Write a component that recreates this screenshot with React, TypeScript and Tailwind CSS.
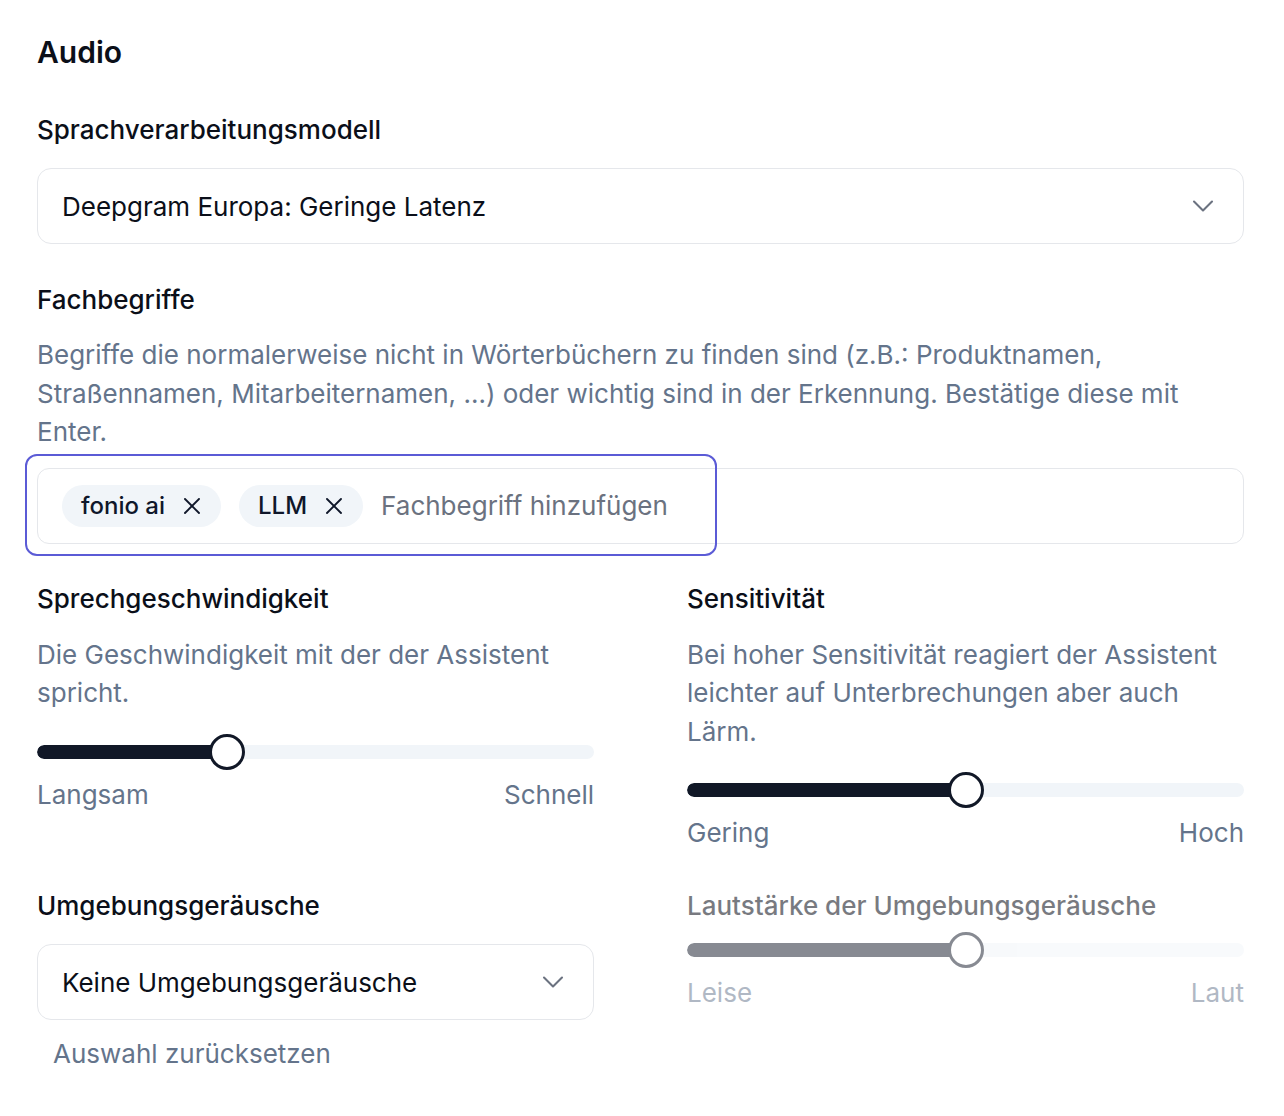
import { ChevronDown, X } from "lucide-react";

type SliderProps = {
  value: number;
  disabled?: boolean;
};

// track spans the full column; the thumb stays inside the track like radix does
const Slider = ({ value, disabled }: SliderProps) => {
  const thumbLeft = `calc(${value}% - ${(value / 100) * 36}px)`;
  const fillWidth = `calc(${value}% - ${(value / 100) * 36}px + 18px)`;
  return (
    <div className={`relative flex h-9 items-center ${disabled ? "opacity-50" : ""}`}>
      <div className="h-[14px] w-full overflow-hidden rounded-full bg-[#f1f5f9]">
        <div className="h-full rounded-full bg-[#111827]" style={{ width: fillWidth }} />
      </div>
      <span
        className="absolute top-0 h-9 w-9 rounded-full border-[3px] border-[#111827] bg-white"
        style={{ left: thumbLeft }}
      />
    </div>
  );
};

const Scale = ({ from, to, disabled }: { from: string; to: string; disabled?: boolean }) => (
  <div className={`mt-[6px] flex justify-between text-[26px] leading-[38px] text-[#64748b] ${disabled ? "opacity-50" : ""}`}>
    <span>{from}</span>
    <span>{to}</span>
  </div>
);

const SelectBox = ({ label }: { label: string }) => (
  <button
    type="button"
    className="flex h-[76px] w-full items-center justify-between rounded-[14px] border border-[#e5e7eb] bg-white pl-6 pr-[22px] text-left text-[26px] text-[#0b0f19]"
  >
    <span>{label}</span>
    <ChevronDown size={36} strokeWidth={1.4} className="text-[#6b7280]" />
  </button>
);

const Tag = ({ label }: { label: string }) => (
  <span className="flex h-[42px] items-center gap-[13px] rounded-full bg-[#f1f5f9] pl-[19px] pr-[15px] text-[24px] font-medium text-[#0f172a]">
    {label}
    <X size={28} strokeWidth={1.6} />
  </span>
);

const Label = ({ children }: { children: React.ReactNode }) => (
  <h3 className="text-[26px] font-medium leading-[38px] text-[#0b0f19]">{children}</h3>
);

const Hint = ({ children }: { children: React.ReactNode }) => (
  <p className="mt-[18px] text-[26px] leading-[38.5px] text-[#64748b]">{children}</p>
);

export default function App() {
  return (
    <div className="min-h-screen bg-white px-[37px] pt-[30px] font-['Inter',sans-serif] text-[#0b0f19]">
      <h2 className="text-[30px] font-semibold leading-[44px]">Audio</h2>

      <div className="mt-[37px]">
        <Label>Sprachverarbeitungsmodell</Label>
        <div className="mt-[19px] w-[1207px]">
          <SelectBox label="Deepgram Europa: Geringe Latenz" />
        </div>
      </div>

      <div className="mt-[37px] w-[1207px]">
        <Label>Fachbegriffe</Label>
        <p className="mt-[17px] text-[26px] leading-[38.5px] text-[#64748b]">
          Begriffe die normalerweise nicht in Wörterbüchern zu finden sind (z.B.: Produktnamen, Straßennamen,
          Mitarbeiternamen, ...) oder wichtig sind in der Erkennung. Bestätige diese mit Enter.
        </p>
        <div className="relative mt-[16px]">
          <div className="flex h-[76px] items-center gap-[18px] rounded-[12px] border border-[#e5e7eb] bg-white pl-6">
            <Tag label="fonio ai" />
            <Tag label="LLM" />
            <input
              placeholder="Fachbegriff hinzufügen"
              className="w-[400px] bg-transparent text-[26px] text-[#0b0f19] outline-none placeholder:text-[#6b7280]"
            />
          </div>
          {/* focus ring of the tag editor */}
          <div className="pointer-events-none absolute -top-[14px] -left-3 h-[102px] w-[692px] rounded-[12px] border-2 border-[#5b5bd6]" />
        </div>
      </div>

      <div className="mt-[36px] grid w-[1207px] grid-cols-[557px_557px] gap-x-[93px] gap-y-[35px]">
        <div>
          <Label>Sprechgeschwindigkeit</Label>
          <Hint>Die Geschwindigkeit mit der der Assistent spricht.</Hint>
          <div className="mt-[21px]">
            <Slider value={33} />
            <Scale from="Langsam" to="Schnell" />
          </div>
        </div>

        <div>
          <Label>Sensitivität</Label>
          <Hint>Bei hoher Sensitivität reagiert der Assistent leichter auf Unterbrechungen aber auch Lärm.</Hint>
          <div className="mt-[21px]">
            <Slider value={50} />
            <Scale from="Gering" to="Hoch" />
          </div>
        </div>

        <div>
          <Label>Umgebungsgeräusche</Label>
          <div className="mt-[19px]">
            <SelectBox label="Keine Umgebungsgeräusche" />
          </div>
          <button type="button" className="mt-[15px] px-4 text-[26px] leading-[38px] text-[#64748b]">
            Auswahl zurücksetzen
          </button>
        </div>

        <div>
          <div className="opacity-55">
            <Label>Lautstärke der Umgebungsgeräusche</Label>
          </div>
          <div className="mt-[7px]">
            <Slider value={50} disabled />
            <Scale from="Leise" to="Laut" disabled />
          </div>
        </div>
      </div>
    </div>
  );
}
